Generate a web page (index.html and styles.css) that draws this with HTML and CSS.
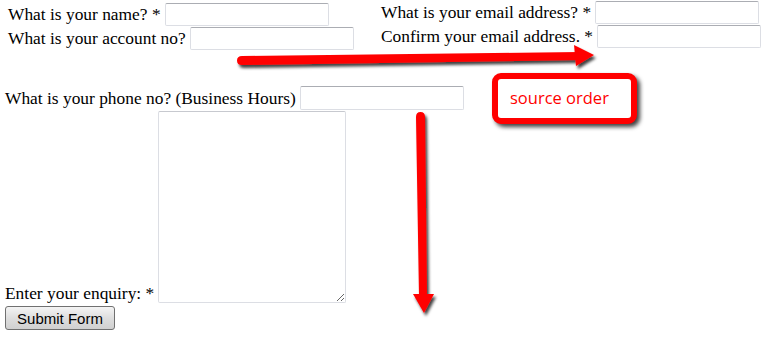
FILE: index.html
```html
<!DOCTYPE html>
<html lang="en">
  <head>
    <meta charset="utf-8" />
    <meta name="viewport" content="width=device-width, initial-scale=1.0" />
    <title>Enquiry form</title>
    <link rel="stylesheet" href="styles.css">
  </head>
  <body>
    <form class="enquiry">
      <div class="top-cols">
        <div class="col col-left">
          <div class="field-row">
            <label for="name">What is your name? *</label>
            <input id="name" type="text" />
          </div>
          <div class="field-row">
            <label for="account">What is your account no?</label>
            <input id="account" type="text" />
          </div>
        </div>
        <div class="col col-right">
          <div class="field-row">
            <label for="email">What is your email address? *</label>
            <input id="email" type="text" />
          </div>
          <div class="field-row">
            <label for="email2">Confirm your email address. *</label>
            <input id="email2" type="text" />
          </div>
        </div>
      </div>
      <div class="lower">
        <div class="field-row phone-row">
          <label for="phone">What is your phone no? (Business Hours)</label>
          <input id="phone" type="text" />
        </div>
        <div class="enquiry-row">
          <label for="enquiry">Enter your enquiry: *</label>
          <textarea id="enquiry"></textarea>
        </div>
        <button type="button" class="submit-btn">Submit Form</button>
      </div>
    </form>

    <div class="callout">source order</div>

    <svg class="arrows" width="771" height="347" viewBox="0 0 771 347">
      <defs>
        <filter id="shadow" x="-10%" y="-10%" width="130%" height="130%">
          <feDropShadow dx="2" dy="3" stdDeviation="1.6" flood-color="#000" flood-opacity="0.75" />
        </filter>
      </defs>
      <g filter="url(#shadow)" fill="#ff0000">
        <path d="M242 56 L580 52 L580 60 L242 65 Q237 65 237 60.5 Q237 56 242 56 Z" />
        <path d="M574 45 L594 55 L576 66 Z" />
        <path d="M416 117 Q416 112 420.5 112 Q425 112 425 117 L427 296 L419 296 Z" />
        <path d="M413 294 L434 294 L424 313 Z" />
      </g>
    </svg>
  </body>
</html>
```

FILE: styles.css
```css
* {
  box-sizing: border-box;
}

body {
  margin: 0;
  font-family: "Liberation Serif", "Times New Roman", serif;
  font-size: 17.4px;
  color: #000;
  background: #fff;
}

.top-cols {
  display: flex;
  padding-left: 8px;
}

.col-left {
  width: 373px;
  padding-top: 2px;
}

.field-row {
  display: flex;
  align-items: center;
  gap: 4px;
  height: 24px;
}

label {
  white-space: nowrap;
}

input {
  width: 164px;
  height: 23px;
  border: 1px solid #dcdee4;
  border-top-color: #abadb3;
  border-radius: 2px;
  background: #fff;
  font-size: 14px;
  padding: 2px;
}

.lower {
  padding-left: 5px;
  margin-top: 36px;
}

.phone-row input {
  height: 24px;
}

.enquiry-row {
  display: flex;
  align-items: flex-end;
  gap: 4px;
  margin-top: 1px;
}

.enquiry-row label {
  line-height: 20px;
}

textarea {
  width: 188px;
  height: 192px;
  margin: 0;
  border: 1px solid #dcdee4;
  border-top-color: #c7c9cf;
  border-radius: 2px;
  resize: both;
}

.submit-btn {
  display: block;
  margin-top: 3px;
  width: 110px;
  height: 24px;
  font-family: "Liberation Sans", Arial, sans-serif;
  font-size: 15px;
  color: #000;
  background: linear-gradient(#f4f4f4, #dedede 50%, #d0d0d0);
  border: 1px solid #707070;
  border-radius: 3px;
  padding: 0;
}

.callout {
  position: absolute;
  left: 492px;
  top: 73px;
  width: 145px;
  height: 51px;
  border: 6px solid #ff0000;
  border-radius: 9px;
  background: #fff;
  box-shadow: 3px 3px 4px rgba(0, 0, 0, 0.75);
  color: #ff0000;
  font-family: "Open Sans", sans-serif;
  font-size: 16.5px;
  padding: 7px 0 0 12px;
  line-height: 24px;
}

.arrows {
  position: absolute;
  left: 0;
  top: 0;
  pointer-events: none;
}
```
